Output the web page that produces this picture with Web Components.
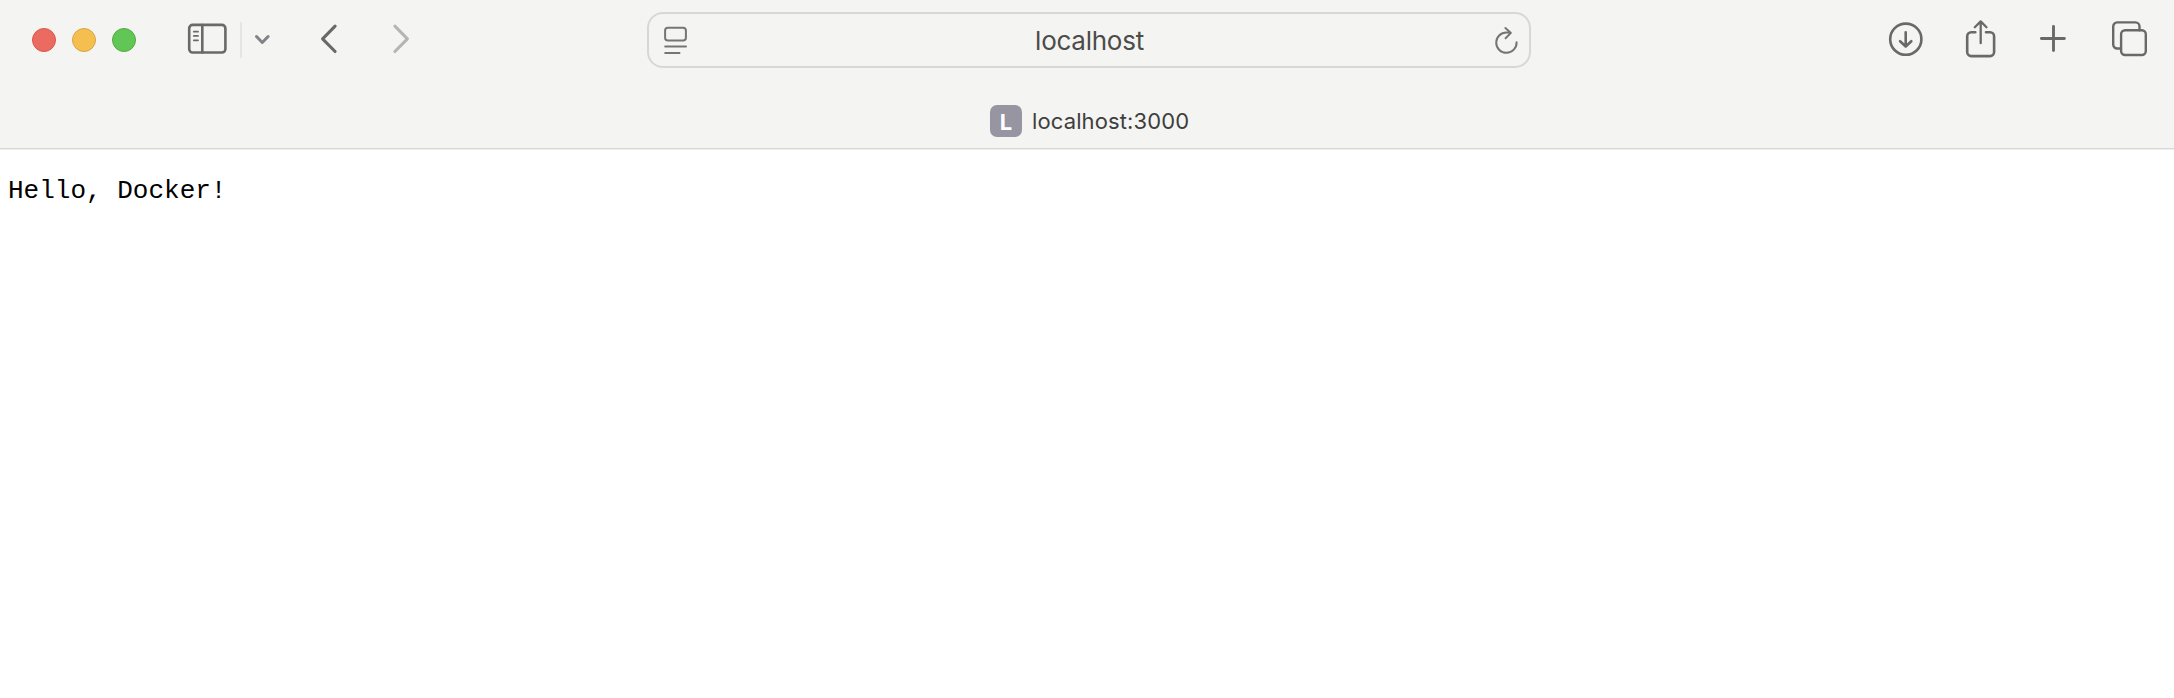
<!DOCTYPE html>
<html lang="en">
<head>
<meta charset="utf-8">
<title>localhost:3000</title>
<style>
body { margin: 0; background: #fff; }
</style>
</head>
<body>
<browser-window></browser-window>
<script>
class WindowLights extends HTMLElement {
  constructor() {
    super();
    this.attachShadow({ mode: 'open' }).innerHTML = `
      <style>
        :host { display: flex; gap: 16px; }
        i { box-sizing: border-box; width: 24px; height: 24px; border-radius: 50%; border: 1px solid; }
        .close { background: #ec6b60; border-color: #d8574c; }
        .min { background: #f5bf4f; border-color: #d9a641; }
        .max { background: #62c656; border-color: #51ab44; }
      </style>
      <i class="close"></i><i class="min"></i><i class="max"></i>`;
  }
}
customElements.define('window-lights', WindowLights);

// name: [width, height, stroke width, artwork]
const ICONS = {
  sidebar: [40, 32, 2.6, '<rect x="2.2" y="1.9" width="36.2" height="27.6" rx="3.5"/><path d="M15.3 2v27.5"/><path d="M6.8 8.7H11M6.8 12.9H11M6.8 17.3H11" stroke-width="1.7"/>'],
  down: [16, 12, 3, '<path d="M2.5 2.5 8.3 8.5l5.8-6"/>'],
  back: [18, 30, 3.1, '<path d="M15.1 2.2 2.6 14.8l12.5 12.7"/>'],
  forward: [18, 30, 3.1, '<path d="M2.9 2.2 15.4 14.8 2.9 27.5"/>'],
  reader: [24, 30, 2, '<rect x="1.1" y="1.7" width="20.8" height="12.8" rx="2.8"/><path d="M1.2 20.4H22M1.2 27h14.3"/>'],
  reload: [24, 30, 2, '<path d="M22.6 16.3A10.2 10.2 0 1 1 12.4 6.4q2.1 0 4 .5M11.4 2 16.9 6.9l-5.3 5.4"/>'],
  download: [36, 36, 2.6, '<circle cx="17.8" cy="18.2" r="15.6"/><path d="M17.7 11.2v14.1M12.1 20.2l5.6 5.3 5.6-5.3"/>'],
  share: [32, 40, 2.6, '<path d="M10.3 13.2H6.2a4 4 0 0 0-4 4v15.9a4 4 0 0 0 4 4h18.9a4 4 0 0 0 4-4V17.2a4 4 0 0 0-4-4H21"/><path d="M15.7 24.2V2.8M9.8 8.2l5.9-5.8 5.8 5.8" stroke-width="2.3"/>'],
  plus: [28, 28, 2.9, '<path d="M14.5 1.5v24M2.4 13.5h23"/>'],
  tabs: [38, 38, 2.4, '<g transform="translate(1 -.6)"><path d="M9.8 28.1H6.2a4 4 0 0 1-4-4V6a4 4 0 0 1 4-4h18.3a4 4 0 0 1 4 4v3.8"/><rect x="10.1" y="9.8" width="24.7" height="24.8" rx="4"/></g>']
};
class ToolIcon extends HTMLElement {
  constructor() {
    super();
    this.attachShadow({ mode: 'open' });
  }
  connectedCallback() {
    const [w, h, stroke, art] = ICONS[this.getAttribute('name')];
    this.shadowRoot.innerHTML = `
      <style>
        :host { display: block; flex: none; color: #696967; }
        svg { display: block; }
      </style>
      <svg width="${w}" height="${h}" viewBox="0 0 ${w} ${h}" fill="none" stroke="currentColor"
        stroke-width="${stroke}" stroke-linecap="round" stroke-linejoin="round">${art}</svg>`;
  }
}
customElements.define('tool-icon', ToolIcon);

class AddressField extends HTMLElement {
  constructor() {
    super();
    this.attachShadow({ mode: 'open' }).innerHTML = `
      <style>
        :host { box-sizing: border-box; display: flex; align-items: flex-start; justify-content: space-between;
          width: 884px; height: 56px; border: 2px solid #d7d7d6; border-radius: 16px; padding: 0 11px 0 15px;
          background: #f4f4f2; color: #4c4c4b; font: 26px/53px Inter, sans-serif; }
        tool-icon { color: #757573; margin-top: 12px; }
        .text { letter-spacing: -0.25px; margin-right: 3px; }
      </style>
      <tool-icon name="reader"></tool-icon>
      <span class="text"><slot></slot></span>
      <tool-icon name="reload"></tool-icon>`;
  }
}
customElements.define('address-field', AddressField);

class BrowserToolbar extends HTMLElement {
  constructor() {
    super();
    this.attachShadow({ mode: 'open' }).innerHTML = `
      <style>
        :host { box-sizing: border-box; display: flex; height: 92px; align-items: flex-start; padding: 12px 26px 0 32px; }
        window-lights { margin-top: 16px; }
        .nav { display: flex; width: 511px; }
        .nav tool-icon, .actions tool-icon { margin-top: var(--y); }
        hr { width: 2px; height: 36px; margin: 10px 13px 0; border: 0; background: #e5e5e4; }
        .actions { display: flex; margin-left: auto; }
      </style>
      <window-lights></window-lights>
      <div class="nav">
        <tool-icon name="sidebar" style="--y:11px;margin-left:51px"></tool-icon>
        <hr>
        <tool-icon name="down" style="--y:22px;margin-left:-1px;color:#828287"></tool-icon>
        <tool-icon name="back" style="--y:12px;margin-left:50px"></tool-icon>
        <tool-icon name="forward" style="--y:12px;margin-left:54px;color:#b5b5b4"></tool-icon>
      </div>
      <address-field>localhost</address-field>
      <div class="actions">
        <tool-icon name="download" style="--y:9px"></tool-icon>
        <tool-icon name="share" style="--y:7px;margin-left:41px"></tool-icon>
        <tool-icon name="plus" style="--y:13px;margin-left:42px"></tool-icon>
        <tool-icon name="tabs" style="--y:9px;margin-left:43px"></tool-icon>
      </div>`;
  }
}
customElements.define('browser-toolbar', BrowserToolbar);

class PageTab extends HTMLElement {
  constructor() {
    super();
    this.attachShadow({ mode: 'open' }).innerHTML = `
      <style>
        :host { display: flex; height: 57px; box-sizing: border-box; padding: 13px 0 0 990px; gap: 10px;
          border-bottom: 1px solid #d7d7d6; color: #3e3e3d; font: 22px/32px Inter, sans-serif; letter-spacing: 0.12px; }
        b { width: 32px; height: 32px; border-radius: 7px; background: #9695a1; color: #fff; font-weight: 700; text-align: center; line-height: 34px; }
      </style>
      <b>L</b><span><slot></slot></span>`;
  }
}
customElements.define('page-tab', PageTab);

class BrowserWindow extends HTMLElement {
  constructor() {
    super();
    this.attachShadow({ mode: 'open' }).innerHTML = `
      <style>
        :host { display: flex; flex-direction: column; height: 698px; }
        header { background: #f4f4f2; height: 150px; border-bottom: 1px solid #f0f0f0; box-sizing: border-box; }
        main { flex: 1; background: #fff; }
        pre { margin: 0; padding: 26px 8px; font: 26px/30px "Liberation Mono", monospace; color: #000; }
      </style>
      <header>
        <browser-toolbar></browser-toolbar>
        <page-tab>localhost:3000</page-tab>
      </header>
      <main><pre>Hello, Docker!</pre></main>`;
  }
}
customElements.define('browser-window', BrowserWindow);
</script>
</body>
</html>
